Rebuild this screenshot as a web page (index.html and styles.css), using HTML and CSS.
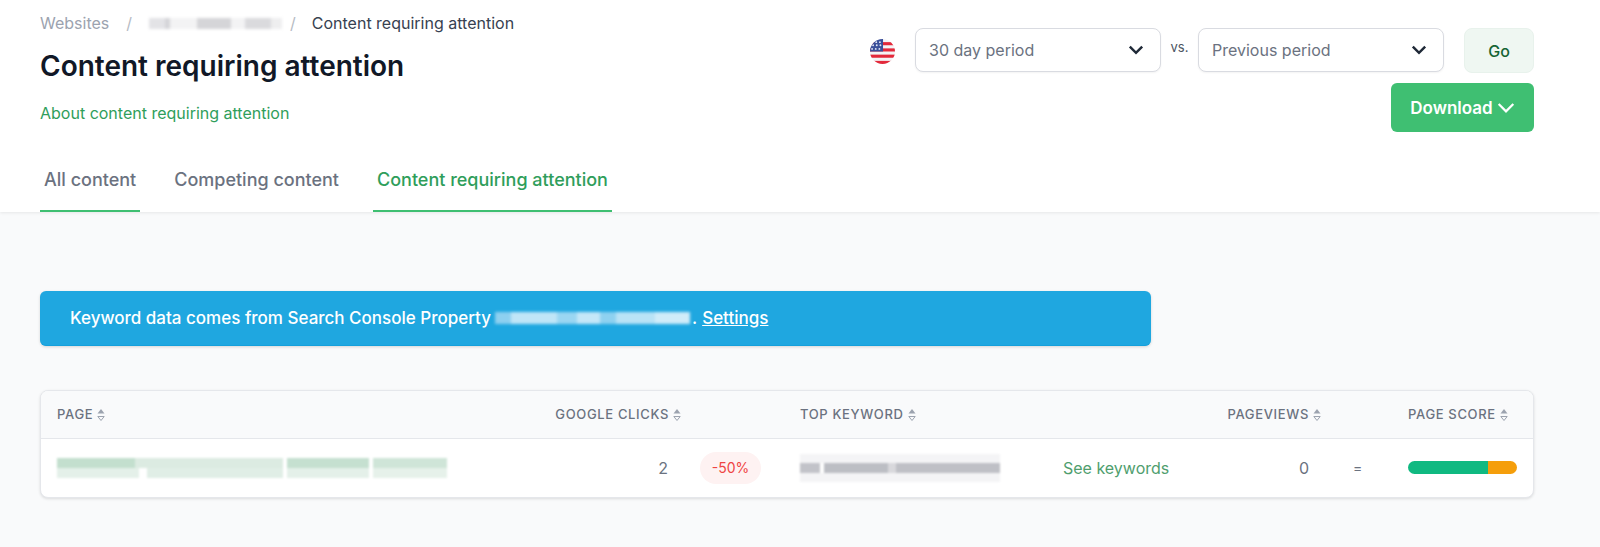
FILE: index.html
```html
<!DOCTYPE html>
<html lang="en">
<head>
<meta charset="utf-8">
<title>Content requiring attention</title>
<link rel="stylesheet" href="styles.css">
</head>
<body>
<header class="top">
  <div class="top-row">
    <div class="intro">
      <nav class="crumbs">
        <a class="crumb-link">Websites</a>
        <span class="sep sep-first">/</span>
        <span class="redact redact-crumb"></span>
        <span class="sep sep-second">/</span>
        <span class="crumb-current">Content requiring attention</span>
      </nav>
      <h1 class="title">Content requiring attention</h1>
      <a class="about">About content requiring attention</a>
    </div>
    <div class="controls">
      <div class="filter-row">
        <svg class="flag" viewBox="0 0 24 24" aria-hidden="true">
          <defs><clipPath id="flagclip"><circle cx="12" cy="12" r="12"/></clipPath></defs>
          <g clip-path="url(#flagclip)">
            <rect width="24" height="24" fill="#f4f4f6"/>
            <rect y="3" width="24" height="3" fill="#e3293b"/>
            <rect y="9" width="24" height="3" fill="#e3293b"/>
            <rect y="15" width="24" height="3" fill="#e3293b"/>
            <rect y="21" width="24" height="3" fill="#e3293b"/>
            <rect width="12.5" height="12" fill="#3a4f9a"/>
            <g fill="#dfe4f4">
              <circle cx="6" cy="3" r=".9"/><circle cx="9.5" cy="3" r=".9"/>
              <circle cx="3" cy="6" r=".9"/><circle cx="6.5" cy="6" r=".9"/><circle cx="10" cy="6" r=".9"/>
              <circle cx="2" cy="9.5" r=".9"/><circle cx="5.5" cy="9.5" r=".9"/><circle cx="9" cy="9.5" r=".9"/>
            </g>
          </g>
        </svg>
        <div class="select">
          <span>30 day period</span>
          <svg class="chev" viewBox="0 0 16 16" aria-hidden="true"><path d="M2.5 5l5.5 5.5L13.5 5" fill="none" stroke="#1f2937" stroke-width="2.2"/></svg>
        </div>
        <span class="vs">vs.</span>
        <div class="select">
          <span>Previous period</span>
          <svg class="chev" viewBox="0 0 16 16" aria-hidden="true"><path d="M2.5 5l5.5 5.5L13.5 5" fill="none" stroke="#1f2937" stroke-width="2.2"/></svg>
        </div>
        <button class="go">Go</button>
      </div>
      <button class="download">Download
        <svg class="chev-w" viewBox="0 0 16 16" aria-hidden="true"><path d="M1.5 4.5L8 11l6.500-6.500" fill="none" stroke="#fff" stroke-width="2"/></svg>
      </button>
    </div>
  </div>
  <nav class="tabs">
    <a class="tab tab-plain">All content</a>
    <a class="tab tab-none">Competing content</a>
    <a class="tab tab-active">Content requiring attention</a>
  </nav>
</header>
<main class="main">
  <div class="banner">
    <span>Keyword data comes from Search Console Property</span>
    <span class="redact redact-banner"></span>
    <span class="dot">.</span>
    <a class="settings">Settings</a>
  </div>
  <div class="card">
    <table class="grid">
      <colgroup>
        <col class="c1"><col class="c2"><col class="c3"><col class="c4"><col class="c5"><col class="c6"><col class="c7"><col class="c8">
      </colgroup>
      <thead>
        <tr>
          <th class="left">PAGE<svg class="sort" viewBox="0 0 10 14" aria-hidden="true"><path d="M5 1L8.500 5.500H1.500Z" fill="#9ca3af"/><path d="M5 12.500L1.800 8.500H8.200Z" fill="none" stroke="#9ca3af"/></svg></th>
          <th class="right">GOOGLE CLICKS<svg class="sort" viewBox="0 0 10 14" aria-hidden="true"><path d="M5 1L8.500 5.500H1.500Z" fill="#9ca3af"/><path d="M5 12.500L1.800 8.500H8.200Z" fill="none" stroke="#9ca3af"/></svg></th>
          <th></th>
          <th class="left">TOP KEYWORD<svg class="sort" viewBox="0 0 10 14" aria-hidden="true"><path d="M5 1L8.500 5.500H1.500Z" fill="#9ca3af"/><path d="M5 12.500L1.800 8.500H8.200Z" fill="none" stroke="#9ca3af"/></svg></th>
          <th></th>
          <th class="right">PAGEVIEWS<svg class="sort" viewBox="0 0 10 14" aria-hidden="true"><path d="M5 1L8.500 5.500H1.500Z" fill="#9ca3af"/><path d="M5 12.500L1.800 8.500H8.200Z" fill="none" stroke="#9ca3af"/></svg></th>
          <th></th>
          <th class="left">PAGE SCORE<svg class="sort" viewBox="0 0 10 14" aria-hidden="true"><path d="M5 1L8.500 5.500H1.500Z" fill="#9ca3af"/><path d="M5 12.500L1.800 8.500H8.200Z" fill="none" stroke="#9ca3af"/></svg></th>
        </tr>
      </thead>
      <tbody>
        <tr>
          <td class="cell-page"><span class="redact redact-page"></span></td>
          <td class="num num-clicks">2</td>
          <td class="cell-badge"><span class="badge">-50%</span></td>
          <td class="cell-kw"><span class="redact redact-kw"></span></td>
          <td class="cell-see"><a class="see">See keywords</a></td>
          <td class="num num-views">0</td>
          <td class="cell-eq">=</td>
          <td class="cell-score"><div class="bar"><span class="bar-good"></span><span class="bar-warn"></span></div></td>
        </tr>
      </tbody>
    </table>
  </div>
</main>
</body>
</html>
```
FILE: styles.css
```css
* { box-sizing: border-box; }
html, body { margin: 0; padding: 0; }
body {
  height: 547px;
  overflow: hidden;
  background: #f9fafb;
  font-family: Inter, "Liberation Sans", sans-serif;
  color: #6b7280;
}
.top {
  height: 212px;
  background: #fff;
  box-shadow: 0 1px 3px rgba(0, 0, 0, .08);
  padding: 0 66px 0 40px;
  display: flex;
  flex-direction: column;
  justify-content: space-between;
}
.top-row { display: flex; justify-content: space-between; }
.crumbs {
  display: flex;
  align-items: center;
  height: 24px;
  margin-top: 11px;
  font-size: 16px;
}
.crumb-link { color: #9ca3af; }
.sep { color: #b6bbc4; }
.sep-first { margin-left: 17px; }
.sep-second { margin-left: 8px; }
.crumb-current { margin-left: 16px; color: #374151; }
.redact-crumb {
  display: block;
  width: 133px;
  height: 11px;
  margin-left: 17px;
  filter: blur(1.5px);
  background:
    linear-gradient(90deg, #e3e3e6 0 12%, #d4d4d8 12% 16%, #f3f3f4 16% 36%, #d5d5d8 36% 62%, #f3f3f4 62% 72%, #dadadd 72% 92%, #eeeeef 92%);
}
.title {
  margin: 14px 0 0;
  font-size: 28px;
  line-height: 34px;
  font-weight: 600;
  color: #111827;
}
.about {
  display: block;
  margin-top: 18px;
  font-size: 16px;
  line-height: 24px;
  color: #2f9e5b;
}
.controls {
  display: flex;
  flex-direction: column;
  align-items: flex-end;
  gap: 10px;
  padding-top: 28px;
}
.filter-row { display: flex; align-items: flex-start; }
.flag { width: 25px; height: 25px; margin: 11px 20px 0 0; }
.select {
  width: 246px;
  height: 44px;
  padding: 0 13px;
  display: flex;
  align-items: center;
  justify-content: space-between;
  background: #fff;
  border: 1px solid #d9dbe1;
  border-radius: 8px;
  box-shadow: 0 1px 2px rgba(0, 0, 0, .05);
  font-size: 16px;
  color: #6b7280;
}
.chev { width: 18px; height: 18px; margin-right: 2px; }
.vs {
  width: 37px;
  padding-top: 11px;
  text-align: center;
  font-size: 13px;
  color: #4b5563;
}
.go {
  width: 70px;
  height: 45px;
  margin-left: 20px;
  background: #eff7f2;
  border: 1px solid #e8f2ec;
  border-radius: 8px;
  font: 500 16px Inter, sans-serif;
  color: #166534;
}
.download {
  width: 143px;
  height: 49px;
  display: flex;
  align-items: center;
  justify-content: center;
  gap: 4px;
  background: #3fbf72;
  border: 0;
  border-radius: 6px;
  font: 600 17px Inter, sans-serif;
  color: #fff;
}
.chev-w { width: 18px; height: 18px; }
.tabs { display: flex; gap: 30px; }
.tab {
  display: block;
  height: 44px;
  padding: 0 4px;
  font-size: 18px;
  font-weight: 500;
  line-height: 24px;
  color: #6b7280;
}
.tab-plain, .tab-active { border-bottom: 2px solid #3fbf72; }
.tab-active { color: #2f9e5b; }
.main { padding: 79px 66px 0 40px; }
.banner {
  width: 1111px;
  height: 55px;
  padding: 0 30px;
  display: flex;
  align-items: center;
  background: #1fa7e0;
  border-bottom: 1px solid #14a0dc;
  border-radius: 6px;
  box-shadow: 0 1px 3px rgba(0, 0, 0, .15);
  font-size: 17px;
  font-weight: 500;
  color: #fff;
}
.redact-banner {
  display: block;
  width: 195px;
  height: 12px;
  margin-left: 4px;
  filter: blur(1.5px);
  background:
    linear-gradient(90deg, #8dd0f0 0 8%, #bfe5f7 8% 32%, #9ad6f2 32% 42%, #c4e7f8 42% 54%, #8ed1f0 54% 62%, #b9e3f6 62% 82%, #d0ecf9 82%);
}
.dot { margin-left: 2px; }
.settings { margin-left: 5px; text-decoration: underline; }
.card {
  margin-top: 44px;
  height: 108px;
  background: #fff;
  border: 1px solid #e5e7eb;
  border-radius: 8px;
  box-shadow: 0 1px 3px rgba(0, 0, 0, .12);
  overflow: hidden;
}
.grid { width: 100%; table-layout: fixed; border-collapse: collapse; }
.c1 { width: 483px; }
.c2 { width: 174px; }
.c3 { width: 86px; }
.c4 { width: 263px; }
.c5 { width: 154px; }
.c6 { width: 137px; }
.c7 { width: 54px; }
th {
  height: 47px;
  padding: 0 16px;
  background: #f9fafb;
  border-bottom: 1px solid #e5e7eb;
  font-size: 13px;
  font-weight: 500;
  letter-spacing: .65px;
  white-space: nowrap;
  color: #6b7280;
}
.left { text-align: left; }
.right { text-align: right; }
.sort { width: 10px; height: 14px; margin-left: 3px; vertical-align: -3px; }
td { height: 59px; padding: 0; font-size: 16px; }
.redact { flex: none; }
.redact-page {
  display: block;
  width: 390px;
  height: 20px;
  margin-left: 16px;
  filter: blur(1px);
  background:
    linear-gradient(90deg, #c3dfce 0 20%, #dcebe2 20% 58%, #ffffff 58% 59%, #c5e0d0 59% 80%, #ffffff 80% 81%, #cfe5d8 81%) 0 0 / 100% 50% no-repeat,
    linear-gradient(90deg, #e4f0e9 0 21%, #ffffff 21% 23%, #e0eee6 23% 58%, #ffffff 58% 59%, #e4f0e9 59% 80%, #ffffff 80% 81%, #e6f1ea 81%) 0 100% / 100% 50% no-repeat;
}
.num { text-align: right; color: #6b7280; }
.num-clicks { padding-right: 30px; }
.num-views { padding-right: 29px; }
.cell-badge { padding-left: 2px; }
.badge {
  display: inline-block;
  width: 61px;
  height: 32px;
  border-radius: 16px;
  background: #fef2f2;
  text-align: center;
  line-height: 32px;
  font-size: 14px;
  color: #ef4444;
}
.cell-kw { padding-left: 16px; }
.redact-kw {
  display: block;
  width: 200px;
  height: 28px;
  filter: blur(1px);
  background:
    linear-gradient(90deg, #c2c3c9 0 10%, #fff 10% 12%, #bcbec4 12% 44%, #d8d8dc 44% 48%, #bfc0c6 48% 100%) 0 50% / 100% 10px no-repeat,
    #f4f4f6;
}
.cell-see { padding-left: 16px; }
.see { color: #4f9e6e; }
.cell-eq { padding-left: 15px; font-size: 14px; color: #6b7280; }
.cell-score { padding: 0 16px; }
.bar { display: flex; width: 109px; height: 13px; border-radius: 7px; overflow: hidden; }
.bar-good { width: 73%; background: #10b981; }
.bar-warn { width: 27%; background: #f59e0b; }
```
